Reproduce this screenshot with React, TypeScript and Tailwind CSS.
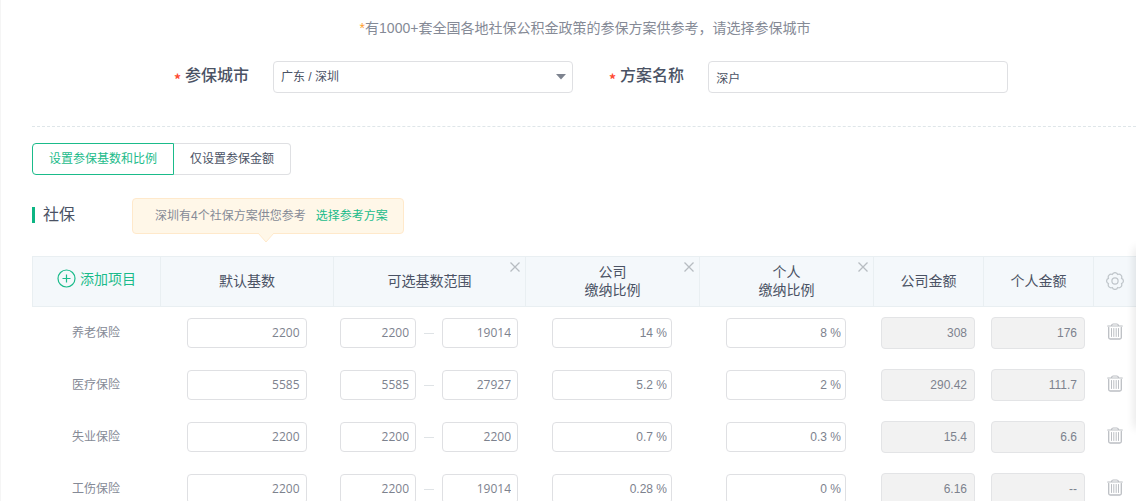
import { useState } from "react";

const rows = [
	{ name: "养老保险", base: "2200", min: "2200", max: "19014", company: "14 %", personal: "8 %", companySum: "308", personalSum: "176" },
	{ name: "医疗保险", base: "5585", min: "5585", max: "27927", company: "5.2 %", personal: "2 %", companySum: "290.42", personalSum: "111.7" },
	{ name: "失业保险", base: "2200", min: "2200", max: "2200", company: "0.7 %", personal: "0.3 %", companySum: "15.4", personalSum: "6.6" },
	{ name: "工伤保险", base: "2200", min: "2200", max: "19014", company: "0.28 %", personal: "0 %", companySum: "6.16", personalSum: "--" },
];

const field = "h-[30px] rounded border border-[#dfe0e3] bg-white text-right text-xs text-[#7d828e] outline-none";
const baseFont = "pb-[2px] font-['Open_Sans','Noto_Sans_CJK_SC',sans-serif] font-medium";
const sumField = "h-8 w-[94px] rounded border border-[#e3e4e6] bg-[#f2f2f2] px-[7px] text-right text-xs text-[#7d828e]";
const headCell = "relative border-y border-l border-[#e9eff2] p-0 pb-[2px] font-normal";

const GearIcon = () => (
	<svg width="18" height="18" viewBox="0 0 18 18" fill="none" stroke="#bfc5ca" strokeWidth="1.2" strokeLinejoin="round">
		<path d="M6.32 2.53A2.82 2.82 0 0 1 11.68 2.53A2.82 2.82 0 0 1 15.47 6.32A2.82 2.82 0 0 1 15.47 11.68A2.82 2.82 0 0 1 11.68 15.47A2.82 2.82 0 0 1 6.32 15.47A2.82 2.82 0 0 1 2.53 11.68A2.82 2.82 0 0 1 2.53 6.32A2.82 2.82 0 0 1 6.32 2.53z" />
		<circle cx="9" cy="9" r="3.1" />
	</svg>
);

const TrashIcon = () => (
	<svg width="16" height="18" viewBox="0 0 16 18" fill="none" stroke="#bcbfc4" strokeLinecap="round" strokeLinejoin="round">
		<path d="M.7 3h14.6M4.3 2.8Q5 1 6.2 1h3.6q1.2 0 1.9 1.8" strokeWidth="1.2" />
		<path d="M1.7 4.5v10q0 1.5 1.5 1.5h9.6q1.5 0 1.5-1.5v-10" strokeWidth="1.3" />
		<path d="M4.5 5.5v8M6.8 5.5v8M9.2 5.5v8M11.5 5.5v8" />
	</svg>
);

const CloseButton = ({ label }: { label: string }) => (
	<button aria-label={label} className="absolute top-[5px] right-[5px]">
		<svg width="10" height="10" viewBox="0 0 10 10" stroke="#b7bcc1" strokeWidth="1.3">
			<path d="M.5.5l9 9M9.5.5l-9 9" />
		</svg>
	</button>
);

const Required = () => <span className="mr-1 pt-[6px] font-['Noto_Sans_CJK_SC',sans-serif] text-sm leading-none font-bold text-[#ff4b33]">*</span>;

const App = () => {
	const [mode, setMode] = useState("ratio");

	const tabClass = (active: boolean) =>
		active
			? "relative rounded-l border border-[#1abb8a] px-4 text-[#1abb8a]"
			: "rounded-r border border-l-0 border-[#dfe0e3] px-4 text-[#4a5264]";

	return (
		<main className="relative h-screen overflow-hidden border-l border-[#f5f5f5] bg-white pt-[18px] pl-[31px] font-['Liberation_Sans','Noto_Sans_CJK_SC',sans-serif] text-[#4a5264]">
			<p className="pl-[2px] text-center text-sm leading-5 text-[#858a96]">
				<span className="text-[#ff9f2e]">*</span>有1000+套全国各地社保公积金政策的参保方案供参考，请选择参保城市
			</p>

			<form className="mt-[23px] flex justify-center gap-9 pl-[14px]">
				<div className="flex items-center">
					<label htmlFor="city" className="mr-6 flex items-center pb-[2px] text-base leading-6 font-medium">
						<Required />
						参保城市
					</label>
					<div className="relative">
						<select
							id="city"
							className="block h-8 w-[300px] appearance-none rounded border border-[#dfe0e3] bg-white px-[7px] text-xs outline-none"
						>
							<option>广东 / 深圳</option>
						</select>
						<svg width="10" height="6" viewBox="0 0 10 6" className="pointer-events-none absolute top-[13px] right-[7px]">
							<path d="M0 0h10L5 5.5z" fill="#7d838f" />
						</svg>
					</div>
				</div>
				<div className="flex items-center">
					<label htmlFor="plan" className="mr-6 flex items-center pb-[2px] text-base leading-6 font-medium">
						<Required />
						方案名称
					</label>
					<input
						id="plan"
						type="text"
						defaultValue="深户"
						className="h-8 w-[300px] rounded border border-[#dfe0e3] px-[7px] text-xs outline-none"
					/>
				</div>
			</form>

			<hr className="mt-[33px] border-dashed border-[#dfe6e9]" />

			<div className="mt-4 flex h-8 text-xs">
				<button className={tabClass(mode === "ratio")} onClick={() => setMode("ratio")}>
					设置参保基数和比例
				</button>
				<button className={tabClass(mode === "amount")} onClick={() => setMode("amount")}>
					仅设置参保金额
				</button>
			</div>

			<div className="mt-[23px] flex items-center">
				<span className="mb-[2px] h-4 w-[3px] bg-[#0db583]" />
				<h2 className="ml-2 pb-[2px] text-base leading-6">社保</h2>
				<div className="relative ml-[57px] flex h-9 items-center gap-[10px] rounded border border-[#ffe9cb] bg-[#fff7e8] pr-[15px] pl-[22px] text-xs text-[#858a96]">
					<span>深圳有4个社保方案供您参考</span>
					<a href="#plans" className="text-[#1abb8a]">
						选择参考方案
					</a>
					<svg width="16" height="10" viewBox="0 0 16 10" className="absolute top-[34px] left-[125px]">
						<path d="M0 0l8 9 8-9" fill="#fff7e8" stroke="#ffe9cb" />
					</svg>
				</div>
			</div>

			<table className="mt-[22px] w-full table-fixed border-separate border-spacing-0 text-center">
				<colgroup>
					<col className="w-[128px]" />
					<col className="w-[173px]" />
					<col className="w-[192px]" />
					<col className="w-[174px]" />
					<col className="w-[174px]" />
					<col className="w-[110px]" />
					<col className="w-[110px]" />
					<col className="w-[43px]" />
				</colgroup>
				<thead className="bg-[#f4f8fb] text-sm leading-[18px]">
					<tr className="h-[51px]">
						<th className={headCell}>
							<button className="inline-flex items-center gap-1 text-[#1abb8a]">
								<svg width="19" height="19" viewBox="0 0 19 19" fill="none" stroke="currentColor" strokeWidth="1.2">
									<circle cx="9.5" cy="9.5" r="8.5" />
									<path d="M9.5 5.5v8M5.5 9.5h8" />
								</svg>
								添加项目
							</button>
						</th>
						<th className={headCell}>默认基数</th>
						<th className={headCell}>
							可选基数范围
							<CloseButton label="移除可选基数范围" />
						</th>
						<th className={headCell}>
							公司
							<br />
							缴纳比例
							<CloseButton label="移除公司缴纳比例" />
						</th>
						<th className={headCell}>
							个人
							<br />
							缴纳比例
							<CloseButton label="移除个人缴纳比例" />
						</th>
						<th className={headCell}>公司金额</th>
						<th className={headCell}>个人金额</th>
						<th className={headCell}>
							<button aria-label="设置" className="mx-auto block">
								<GearIcon />
							</button>
						</th>
					</tr>
				</thead>
				<tbody>
					{rows.map((row) => (
						<tr key={row.name} className="h-[52px]">
							<th scope="row" className="p-0 text-xs font-normal text-[#858a96]">
								{row.name}
							</th>
							<td className="p-0">
								<input aria-label={`${row.name}默认基数`} defaultValue={row.base} className={`${field} ${baseFont} w-[120px] px-[6px]`} />
							</td>
							<td className="p-0">
								<div className="flex items-center justify-center gap-2">
									<input aria-label={`${row.name}最低基数`} defaultValue={row.min} className={`${field} ${baseFont} w-[76px] px-[6px]`} />
									<span className="h-px w-[10px] bg-[#dfe3e6]" />
									<input aria-label={`${row.name}最高基数`} defaultValue={row.max} className={`${field} ${baseFont} w-[76px] px-[6px]`} />
								</div>
							</td>
							<td className="p-0">
								<input aria-label={`${row.name}公司比例`} defaultValue={row.company} className={`${field} w-[120px] px-1`} />
							</td>
							<td className="p-0">
								<input aria-label={`${row.name}个人比例`} defaultValue={row.personal} className={`${field} w-[120px] px-1`} />
							</td>
							<td className="p-0">
								<input aria-label={`${row.name}公司金额`} disabled defaultValue={row.companySum} className={sumField} />
							</td>
							<td className="p-0">
								<input aria-label={`${row.name}个人金额`} disabled defaultValue={row.personalSum} className={sumField} />
							</td>
							<td className="p-0">
								<button aria-label={`删除${row.name}`} className="mx-auto block pb-[2px]">
									<TrashIcon />
								</button>
							</td>
						</tr>
					))}
				</tbody>
			</table>

			{/* collapsed side panel, only its shadow reaches the page */}
			<div className="absolute top-[248px] -right-1 h-[180px] w-1 shadow-[0_0_10px_rgba(0,0,0,0.2)]" />
		</main>
	);
};

export default App;
